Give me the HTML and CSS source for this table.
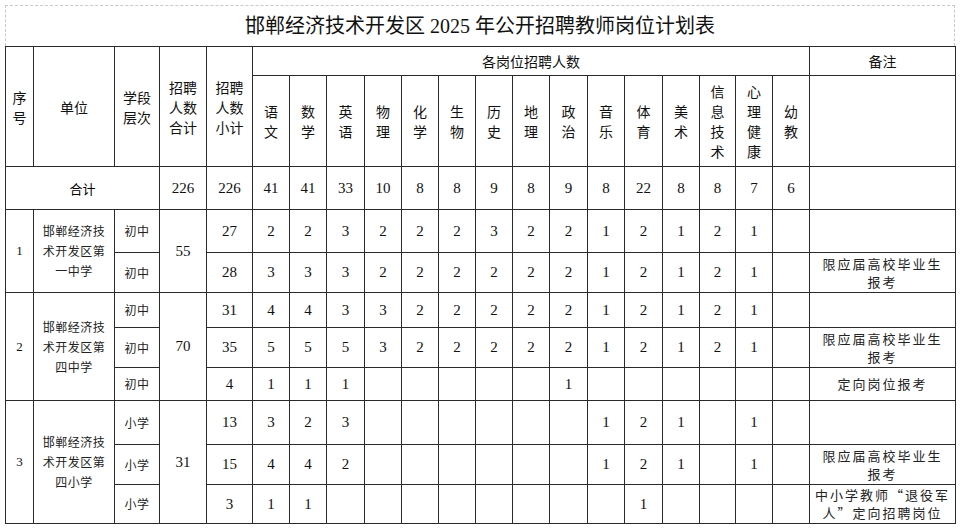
FILE: index.html
```html
<!DOCTYPE html>
<html lang="zh-CN">
<head>
<meta charset="utf-8">
<title>邯郸经济技术开发区2025年公开招聘教师岗位计划表</title>
<link rel="stylesheet" href="styles.css">
</head>
<body>
<div class="page">
  <div class="title">邯郸经济技术开发区 2025 年公开招聘教师岗位计划表</div>
  <table class="plan">
    <colgroup>
      <col style="width:28px"><col style="width:81px"><col style="width:45px"><col style="width:47px"><col style="width:46px">
      <col style="width:37px"><col style="width:37px"><col style="width:38px"><col style="width:37px"><col style="width:37px">
      <col style="width:37px"><col style="width:37px"><col style="width:37px"><col style="width:38px"><col style="width:37px">
      <col style="width:38px"><col style="width:37px"><col style="width:36px"><col style="width:37px"><col style="width:37px">
      <col style="width:146px">
    </colgroup>
    <tr class="r-h1">
      <th class="hd" rowspan="2">序<br>号</th>
      <th class="hd" rowspan="2">单位</th>
      <th class="hd" rowspan="2">学段<br>层次</th>
      <th class="hd" rowspan="2">招聘<br>人数<br>合计</th>
      <th class="hd" rowspan="2">招聘<br>人数<br>小计</th>
      <th class="hd" colspan="15">各岗位招聘人数</th>
      <th class="hd">备注</th>
    </tr>
    <tr class="r-h2">
      <th class="hd">语<br>文</th><th class="hd">数<br>学</th><th class="hd">英<br>语</th><th class="hd">物<br>理</th><th class="hd">化<br>学</th>
      <th class="hd">生<br>物</th><th class="hd">历<br>史</th><th class="hd">地<br>理</th><th class="hd">政<br>治</th><th class="hd">音<br>乐</th>
      <th class="hd">体<br>育</th><th class="hd">美<br>术</th><th class="hd">信<br>息<br>技<br>术</th><th class="hd">心<br>理<br>健<br>康</th><th class="hd">幼<br>教</th>
      <th class="hd"></th>
    </tr>
    <tr class="r-43">
      <td class="total" colspan="3">合计</td>
      <td class="n">226</td><td class="n">226</td>
      <td class="n">41</td><td class="n">41</td><td class="n">33</td><td class="n">10</td><td class="n">8</td><td class="n">8</td><td class="n">9</td><td class="n">8</td><td class="n">9</td><td class="n">8</td><td class="n">22</td><td class="n">8</td><td class="n">8</td><td class="n">7</td><td class="n">6</td>
      <td></td>
    </tr>
    <tr class="r-43">
      <td class="n idx" rowspan="2">1</td>
      <td class="sm" rowspan="2">邯郸经济技<br>术开发区第<br>一中学</td>
      <td class="sm">初中</td>
      <td class="n" rowspan="2">55</td>
      <td class="n">27</td>
      <td class="n">2</td><td class="n">2</td><td class="n">3</td><td class="n">2</td><td class="n">2</td><td class="n">2</td><td class="n">3</td><td class="n">2</td><td class="n">2</td><td class="n">1</td><td class="n">2</td><td class="n">1</td><td class="n">2</td><td class="n">1</td><td></td>
      <td></td>
    </tr>
    <tr class="r-40">
      <td class="sm">初中</td>
      <td class="n">28</td>
      <td class="n">3</td><td class="n">3</td><td class="n">3</td><td class="n">2</td><td class="n">2</td><td class="n">2</td><td class="n">2</td><td class="n">2</td><td class="n">2</td><td class="n">1</td><td class="n">2</td><td class="n">1</td><td class="n">2</td><td class="n">1</td><td></td>
      <td class="rm">限应届高校毕业生<br>报考</td>
    </tr>
    <tr class="r-35">
      <td class="n idx" rowspan="3">2</td>
      <td class="sm" rowspan="3">邯郸经济技<br>术开发区第<br>四中学</td>
      <td class="sm">初中</td>
      <td class="n" rowspan="3">70</td>
      <td class="n">31</td>
      <td class="n">4</td><td class="n">4</td><td class="n">3</td><td class="n">3</td><td class="n">2</td><td class="n">2</td><td class="n">2</td><td class="n">2</td><td class="n">2</td><td class="n">1</td><td class="n">2</td><td class="n">1</td><td class="n">2</td><td class="n">1</td><td></td>
      <td></td>
    </tr>
    <tr class="r-40">
      <td class="sm">初中</td>
      <td class="n">35</td>
      <td class="n">5</td><td class="n">5</td><td class="n">5</td><td class="n">3</td><td class="n">2</td><td class="n">2</td><td class="n">2</td><td class="n">2</td><td class="n">2</td><td class="n">1</td><td class="n">2</td><td class="n">1</td><td class="n">2</td><td class="n">1</td><td></td>
      <td class="rm">限应届高校毕业生<br>报考</td>
    </tr>
    <tr class="r-33">
      <td class="sm">初中</td>
      <td class="n">4</td>
      <td class="n">1</td><td class="n">1</td><td class="n">1</td><td></td><td></td><td></td><td></td><td></td><td class="n">1</td><td></td><td></td><td></td><td></td><td></td><td></td>
      <td class="rm">定向岗位报考</td>
    </tr>
    <tr class="r-44">
      <td class="n idx" rowspan="3">3</td>
      <td class="sm" rowspan="3">邯郸经济技<br>术开发区第<br>四小学</td>
      <td class="sm">小学</td>
      <td class="n" rowspan="3">31</td>
      <td class="n">13</td>
      <td class="n">3</td><td class="n">2</td><td class="n">3</td><td></td><td></td><td></td><td></td><td></td><td></td><td class="n">1</td><td class="n">2</td><td class="n">1</td><td></td><td class="n">1</td><td></td>
      <td></td>
    </tr>
    <tr class="r-40">
      <td class="sm">小学</td>
      <td class="n">15</td>
      <td class="n">4</td><td class="n">4</td><td class="n">2</td><td></td><td></td><td></td><td></td><td></td><td></td><td class="n">1</td><td class="n">2</td><td class="n">1</td><td></td><td class="n">1</td><td></td>
      <td class="rm">限应届高校毕业生<br>报考</td>
    </tr>
    <tr class="r-39">
      <td class="sm">小学</td>
      <td class="n">3</td>
      <td class="n">1</td><td class="n">1</td><td></td><td></td><td></td><td></td><td></td><td></td><td></td><td></td><td class="n">1</td><td></td><td></td><td></td><td></td>
      <td class="rm">中小学教师“退役军<br>人”定向招聘岗位</td>
    </tr>
  </table>
</div>
</body>
</html>
```
FILE: styles.css
```css
html, body {
  margin: 0;
  padding: 0;
  background: #ffffff;
}

body {
  font-family: "Liberation Serif", "Noto Sans CJK SC", serif;
  color: #000;
}

.page {
  padding: 5px 0 0 5px;
}

.title {
  box-sizing: border-box;
  width: 950px;
  height: 41px;
  border: 1px dashed #c8c8c8;
  border-bottom: none;
  text-align: center;
  font-size: 20px;
  line-height: 40px;
  color: #111;
}

.plan {
  border-collapse: collapse;
  table-layout: fixed;
  width: 950px;
}

.plan th,
.plan td {
  border: 1px solid #2a2a2a;
  padding: 0;
  text-align: center;
  vertical-align: middle;
  font-weight: normal;
  overflow: hidden;
}

.hd {
  font-family: "Noto Sans CJK SC", sans-serif;
  font-size: 14px;
  line-height: 20px;
  color: #111;
}

.n {
  font-family: "Liberation Serif", serif;
  font-size: 15px;
  color: #111;
}

.idx {
  font-size: 13px;
}

.total {
  font-family: "Noto Sans CJK SC", sans-serif;
  font-size: 13px;
  font-weight: bold;
}

.sm {
  font-family: "Noto Sans CJK SC", sans-serif;
  font-size: 12px;
  line-height: 20px;
  letter-spacing: 0.5px;
  color: #222;
}

.rm {
  font-family: "Noto Sans CJK SC", sans-serif;
  font-size: 13px;
  line-height: 18px;
  letter-spacing: 2px;
  color: #222;
}

.r-h1 { height: 29px; }
.r-h2 { height: 91px; }
.r-43 { height: 43px; }
.r-40 { height: 40px; }
.r-35 { height: 35px; }
.r-33 { height: 33px; }
.r-44 { height: 44px; }
.r-39 { height: 39px; }
```
